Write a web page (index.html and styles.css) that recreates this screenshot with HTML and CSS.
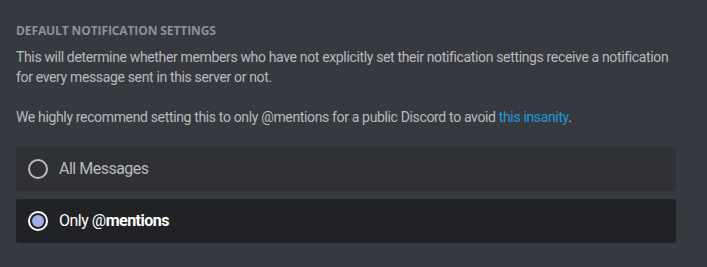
FILE: index.html
```html
<!DOCTYPE html>
<html>
<head>
<meta charset="utf-8">
<link rel="stylesheet" href="styles.css">
</head>
<body>
<div class="section">
  <h5 class="title">Default Notification Settings</h5>
  <div class="desc">This will determine whether members who have not explicitly set their notification settings receive a notification for every message sent in this server or not.<br><br>We highly recommend setting this to only @mentions for a public Discord to avoid <a class="link" href="#">this insanity</a>.</div>
  <div class="options">
    <div class="option">
      <span class="radio"></span>
      <span class="label">All Messages</span>
    </div>
    <div class="option selected">
      <span class="radio"><span class="dot"></span></span>
      <span class="label">Only @<b>mentions</b></span>
    </div>
  </div>
</div>
</body>
</html>
```
FILE: styles.css
```css
html, body {
  margin: 0;
  background: #36393f;
}
body {
  font-family: Roboto, "Open Sans", sans-serif;
  width: 707px;
  height: 267px;
  overflow: hidden;
}
.section {
  padding: 23px 31px 0 16px;
}
.title {
  margin: 0 0 8px;
  font-family: "Open Sans", sans-serif;
  font-size: 12px;
  line-height: 16px;
  font-weight: 700;
  text-transform: uppercase;
  color: #8e9297;
  letter-spacing: -0.1px;
}
.desc {
  font-size: 14px;
  line-height: 20px;
  color: #b9bbbe;
  letter-spacing: -0.35px;
}
.link {
  color: #1e9bd7;
  text-decoration: none;
}
.options {
  margin-top: 20px;
  display: flex;
  flex-direction: column;
  gap: 8px;
}
.option {
  display: flex;
  align-items: center;
  height: 44px;
  padding: 0 12px;
  border-radius: 3px;
  background: #2f3136;
  color: #b9bbbe;
}
.option.selected {
  background: #202225;
  color: #fff;
}
.radio {
  box-sizing: border-box;
  width: 20px;
  height: 20px;
  border-radius: 50%;
  border: 2px solid #b9bbbe;
  display: flex;
  align-items: center;
  justify-content: center;
  flex: none;
}
.selected .radio {
  border-color: #fff;
}
.dot {
  width: 12px;
  height: 12px;
  border-radius: 50%;
  background: #a0aeea;
}
.label {
  margin-left: 11px;
  font-size: 16px;
  line-height: 20px;
  letter-spacing: -0.5px;
}
.label b {
  font-weight: 700;
}
```
